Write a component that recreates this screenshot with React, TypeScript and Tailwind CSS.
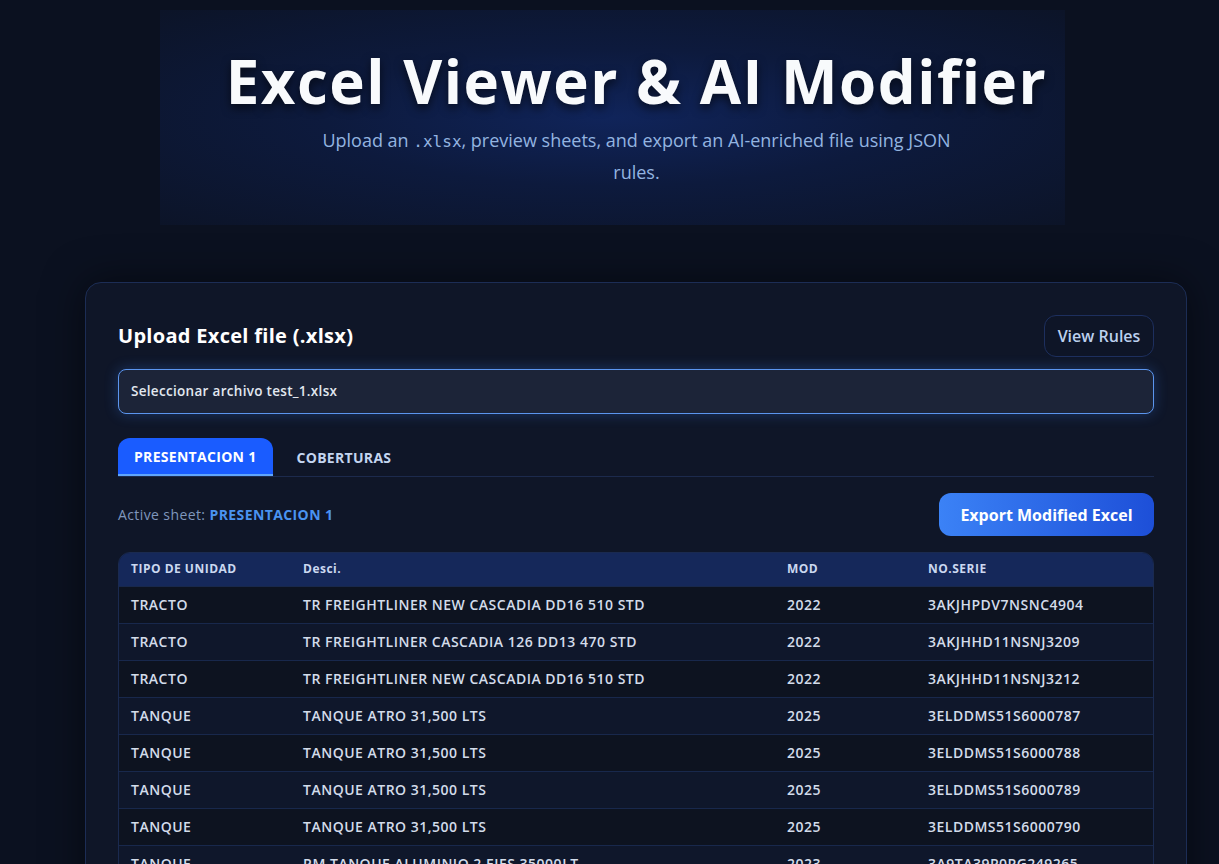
import { useState } from 'react';

type Row = { tipo: string; desc: string; mod: string; serie: string };

const rows: Row[] = [
  { tipo: 'TRACTO', desc: 'TR FREIGHTLINER NEW CASCADIA DD16 510 STD', mod: '2022', serie: '3AKJHPDV7NSNC4904' },
  { tipo: 'TRACTO', desc: 'TR FREIGHTLINER CASCADIA 126 DD13 470 STD', mod: '2022', serie: '3AKJHHD11NSNJ3209' },
  { tipo: 'TRACTO', desc: 'TR FREIGHTLINER NEW CASCADIA DD16 510 STD', mod: '2022', serie: '3AKJHHD11NSNJ3212' },
  { tipo: 'TANQUE', desc: 'TANQUE ATRO 31,500 LTS', mod: '2025', serie: '3ELDDMS51S6000787' },
  { tipo: 'TANQUE', desc: 'TANQUE ATRO 31,500 LTS', mod: '2025', serie: '3ELDDMS51S6000788' },
  { tipo: 'TANQUE', desc: 'TANQUE ATRO 31,500 LTS', mod: '2025', serie: '3ELDDMS51S6000789' },
  { tipo: 'TANQUE', desc: 'TANQUE ATRO 31,500 LTS', mod: '2025', serie: '3ELDDMS51S6000790' },
  { tipo: 'TANQUE', desc: 'RM TANQUE ALUMINIO 2 EJES 35000LT', mod: '2023', serie: '3A9TA39P0PG249265' },
];

const sheets = ['PRESENTACION 1', 'COBERTURAS'];

export default function App() {
  const [active, setActive] = useState(sheets[0]);

  return (
    <div className="min-h-screen bg-[#0b1120] font-['Open_Sans','Noto_Sans',sans-serif] text-slate-100">
      {/* Hero */}
      <div className="pl-[160px] pt-[10px]">
        <div className="flex h-[215px] w-[905px] flex-col items-center bg-[radial-gradient(ellipse_at_center,#10245a_0%,#0d1a3d_45%,#0c1428_100%)] pl-[48px] pt-[36px]">
          <h1 className="text-[60px] font-bold leading-[70px] tracking-[1.5px] text-slate-50 [text-shadow:0_4px_10px_rgba(0,0,0,0.6)]">
            Excel Viewer &amp; AI Modifier
          </h1>
          <p className="mt-[9px] w-[662px] text-center text-[18px] leading-[30px] text-[#93b4e0]">
            Upload an <span className="font-['DejaVu_Sans_Mono',monospace] text-[16px]">.xlsx</span>, preview sheets, and export an AI-enriched file using JSON rules.
          </p>
        </div>
      </div>

      {/* Card */}
      <div className="ml-[85px] mt-[57px] w-[1102px] rounded-2xl border border-[#1c2d55] bg-[#0f1628] px-8 pt-8 pb-10 shadow-[0_0_40px_rgba(0,0,0,0.5)]">
        <div className="flex items-center justify-between">
          <h2 className="text-[20px] font-bold tracking-[0.3px] text-white">Upload Excel file (.xlsx)</h2>
          <button className="h-[42px] w-[110px] rounded-xl border border-[#1d2f5e] bg-[#0e1527] text-[16px] font-semibold text-[#bcd0ee]">
            View Rules
          </button>
        </div>

        <div className="mt-3 flex h-[45px] items-center rounded-lg border border-[#5b95ee] bg-[#1c2438] px-3 text-[13.5px] font-semibold tracking-[0.3px] text-slate-200 shadow-[0_0_14px_rgba(59,130,246,0.3)]">
          Seleccionar archivo test_1.xlsx
        </div>

        {/* Tabs */}
        <div className="mt-6 flex gap-2 border-b border-[#1c2a4d]">
          {sheets.map((s) => (
            <button
              key={s}
              onClick={() => setActive(s)}
              className={
                s === active
                  ? 'h-[38px] rounded-t-xl border-b-2 border-[#60a5fa] bg-[#1a5cff] px-4 text-[14px] font-bold tracking-[0.3px] text-white'
                  : 'h-[38px] px-4 text-[14px] font-bold tracking-[0.3px] text-[#c3d5f0]'
              }
            >
              {s}
            </button>
          ))}
        </div>

        <div className="mt-4 flex items-center justify-between">
          <p className="text-[14px] tracking-[0.4px] text-[#7f97bd]">
            Active sheet: <span className="font-bold text-[#4a93f0]">{active}</span>
          </p>
          <button className="h-[43px] w-[215px] rounded-xl bg-[linear-gradient(90deg,#3b82f6,#1d4fd8)] text-[16px] font-bold text-white">
            Export Modified Excel
          </button>
        </div>

        {/* Table */}
        <div className="mt-4 overflow-hidden rounded-xl border border-[#1a2a50]">
          <table className="w-full text-left">
            <thead className="bg-[#15285a]">
              <tr className="h-[33px] text-[12px] font-bold tracking-[0.5px] text-[#cbd8f0]">
                <th className="w-[172px] pl-3">TIPO DE UNIDAD</th>
                <th className="w-[484px] pl-3">Desci.</th>
                <th className="w-[141px] pl-3">MOD</th>
                <th className="pl-3">NO.SERIE</th>
              </tr>
            </thead>
            <tbody>
              {rows.map((r, i) => (
                <tr
                  key={i}
                  className={`h-[37px] border-t border-[#18284c] text-[14px] font-semibold tracking-[0.5px] text-[#d3dcea] ${i % 2 === 0 ? 'bg-[#0d1320]' : 'bg-[#0f172b]'}`}
                >
                  <td className="pl-3">{r.tipo}</td>
                  <td className="pl-3">{r.desc}</td>
                  <td className="pl-3">{r.mod}</td>
                  <td className="pl-3">{r.serie}</td>
                </tr>
              ))}
            </tbody>
          </table>
        </div>
      </div>
    </div>
  );
}
